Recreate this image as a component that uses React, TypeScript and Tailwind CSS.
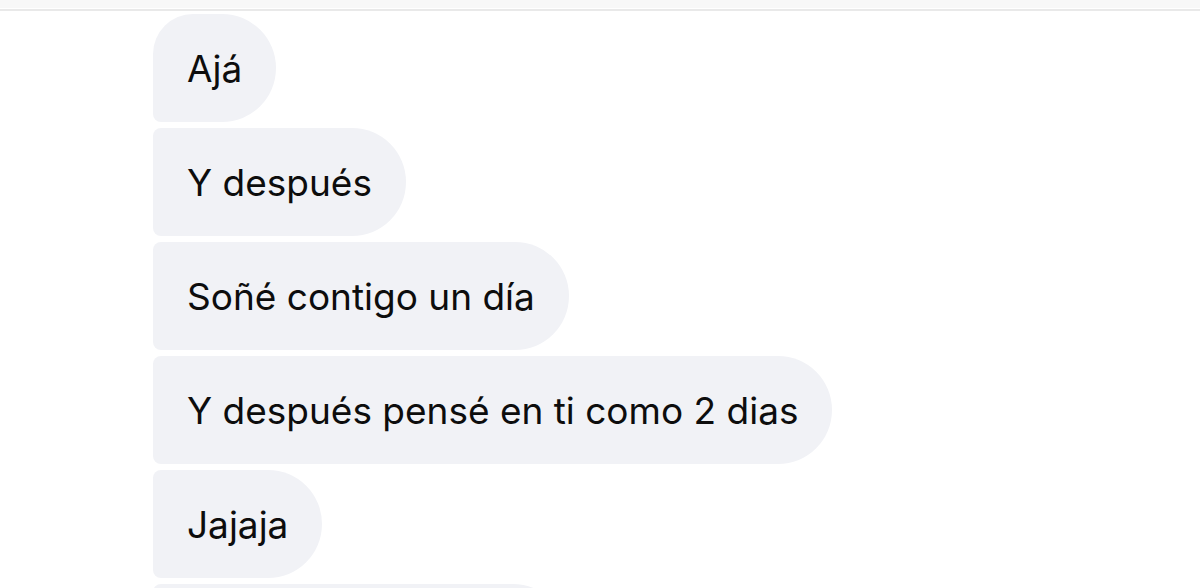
import * as React from 'react'

type Msg = {
  text: string
  first?: boolean
}

const messages: Msg[] = [
  { text: 'Ajá', first: true },
  { text: 'Y después' },
  { text: 'Soñé contigo un día' },
  { text: 'Y después pensé en ti como 2 dias' },
  { text: 'Jajaja' },
]

const Bubble = ({ text, first }: Msg) => {
  return (
    <div
      className={
        first
          ? 'flex h-[108px] shrink-0 items-center rounded-tl-[40px] rounded-bl-[8px] rounded-r-[54px] bg-[#f1f2f6] px-[34px]'
          : 'flex h-[108px] shrink-0 items-center rounded-l-[8px] rounded-r-[54px] bg-[#f1f2f6] px-[34px]'
      }
    >
      <span className="whitespace-nowrap text-[37px] leading-none text-[#0d0d0d]">{text}</span>
    </div>
  )
}

export default function App() {
  return (
    <div
      className="h-[588px] w-full overflow-hidden bg-white"
      style={{ fontFamily: 'Inter, "Noto Sans", sans-serif' }}
    >
      <div className="h-[8px] bg-[#f8f8f8]" />
      <div className="h-[1px] bg-white" />
      <div className="h-[2px] bg-[#e9e9e9]" />

      <div className="mt-[3px] flex flex-col items-start gap-[6px] pl-[153px]">
        {messages.map((m) => (
          <Bubble key={m.text} {...m} />
        ))}
        {/* next bubble, only its top edge shows */}
        <div className="h-[108px] w-[414px] shrink-0 rounded-l-[8px] rounded-r-[54px] bg-[#f1f2f6]" />
      </div>
    </div>
  )
}
